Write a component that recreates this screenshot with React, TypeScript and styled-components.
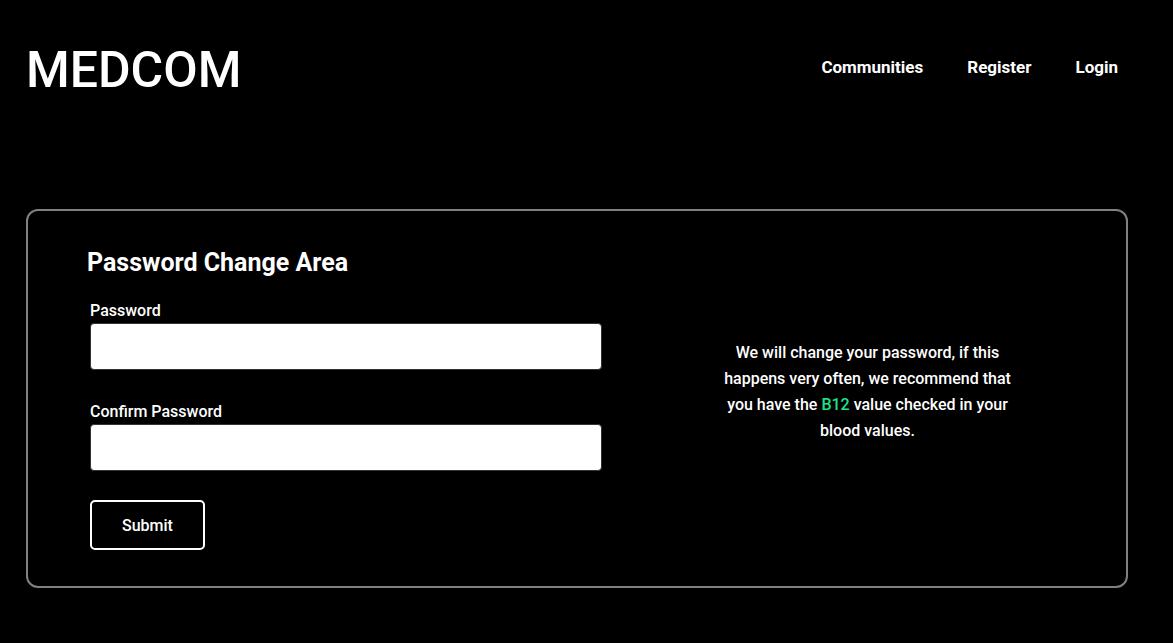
import React from "react";
import styled, { createGlobalStyle } from "styled-components";

const GlobalStyle = createGlobalStyle`
  *, *::before, *::after { box-sizing: border-box; }
  body {
    margin: 0;
    background: #000;
    color: #fff;
    font-family: Roboto, "Liberation Sans", sans-serif;
    font-size: 16px;
    line-height: 25px;
  }
`;

const Page = styled.div`
  padding: 37px 45px 55px 26px;
`;

const Header = styled.header`
  display: flex;
  flex-wrap: wrap;
  align-items: center;
  justify-content: space-between;
  padding-right: 10px;
  margin-bottom: 106px;
`;

const Logo = styled.a`
  color: #fff;
  text-decoration: none;
  font-size: 50px;
  line-height: 66px;
  font-weight: 500;
`;

const Nav = styled.nav`
  display: flex;
  gap: 44px;
  padding-bottom: 6px;
`;

const NavLink = styled.a`
  color: #fff;
  text-decoration: none;
  font-size: 17px;
  font-weight: 700;
`;

const Card = styled.main`
  display: grid;
  grid-template-columns: minmax(0, 515px) minmax(0, 1fr);
  column-gap: 111px;
  align-items: center;
  padding: 36px 104px 36px 59px;
  border: 2px solid #808080;
  border-radius: 12px;
`;

const Title = styled.h1`
  margin: 0 0 19px;
  font-size: 25px;
  line-height: 32px;
  font-weight: 700;
`;

const Form = styled.form`
  padding-left: 3px;
`;

const Field = styled.div`
  display: flex;
  flex-direction: column;
  margin-bottom: 29px;
`;

const Label = styled.label`
  font-weight: 500;
`;

const Input = styled.input`
  width: 100%;
  height: 47px;
  padding: 0 12px;
  border: 1px solid #333;
  border-radius: 4px;
  background: #fff;
  color: #000;
  font: inherit;
`;

const Submit = styled.button`
  height: 50px;
  padding: 0 30px;
  border: 2px solid #fff;
  border-radius: 5px;
  background: #000;
  color: #fff;
  font: inherit;
  font-weight: 500;
`;

const Note = styled.p`
  max-width: 312px;
  margin: 0 auto;
  padding-bottom: 14px;
  line-height: 26px;
  text-align: center;
  font-weight: 500;
`;

const Highlight = styled.span`
  color: #1fe28b;
`;

export default function App() {
  return (
    <>
      <GlobalStyle />
      <Page>
        <Header>
          <Logo href="#">MEDCOM</Logo>
          <Nav>
            <NavLink href="#communities">Communities</NavLink>
            <NavLink href="#register">Register</NavLink>
            <NavLink href="#login">Login</NavLink>
          </Nav>
        </Header>
        <Card>
          <div>
            <Title>Password Change Area</Title>
            <Form onSubmit={(e) => e.preventDefault()}>
              <Field>
                <Label htmlFor="password">Password</Label>
                <Input id="password" type="password" />
              </Field>
              <Field>
                <Label htmlFor="confirm">Confirm Password</Label>
                <Input id="confirm" type="password" />
              </Field>
              <Submit type="submit">Submit</Submit>
            </Form>
          </div>
          <Note>
            We will change your password, if this happens very often, we
            recommend that you have the <Highlight>B12</Highlight> value checked
            in your blood values.
          </Note>
        </Card>
      </Page>
    </>
  );
}
